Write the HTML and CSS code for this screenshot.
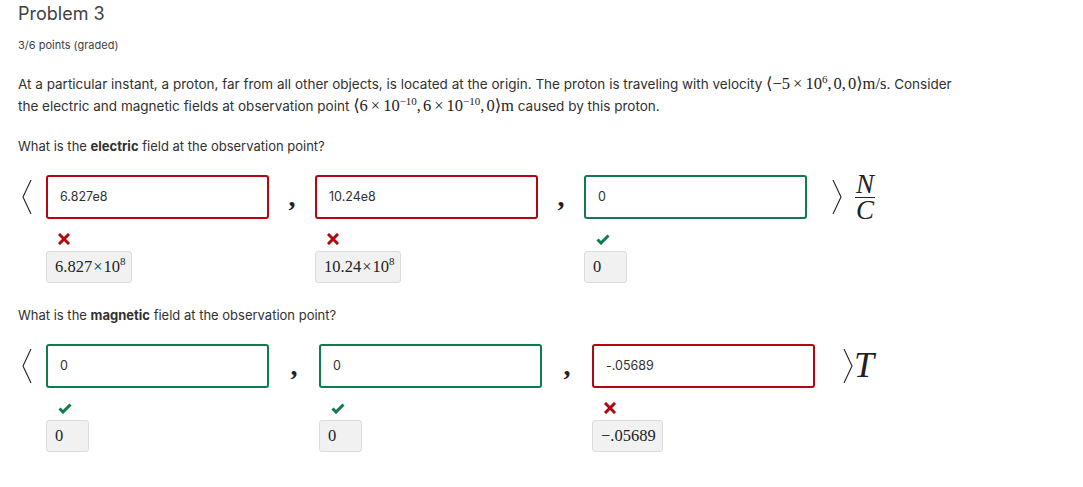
FILE: index.html
```html
<!DOCTYPE html>
<html lang="en">
<head>
    <meta charset="UTF-8">
    <title>Problem 3</title>
    <link rel="stylesheet" href="styles.css">
</head>
<body>
    <div class="problem">
        <h2 class="problem-title">Problem 3</h2>
        <div class="problem-progress">3/6 points (graded)</div>

        <p class="problem-text">
            At a particular instant, a proton, far from all other objects, is located at the origin. The proton is traveling with velocity
            <span class="math">⟨−5<span class="op">×</span>10<sup>6</sup><span class="sep">,</span>0<span class="sep">,</span>0⟩<span class="rm">m/s</span></span>. Consider
            the electric and magnetic fields at observation point
            <span class="math">⟨6<span class="op">×</span>10<sup>−10</sup><span class="sep">,</span>6<span class="op">×</span>10<sup>−10</sup><span class="sep">,</span>0⟩<span class="rm">m</span></span> caused by this proton.
        </p>

        <p class="question">What is the <b>electric</b> field at the observation point?</p>

        <div class="vector-row">
            <div class="bracket">
                <svg width="12" height="36" viewBox="0 0 12 36"><polyline points="10,1 2,18 10,35" fill="none" stroke="#222" stroke-width="1.1"/></svg>
            </div>

            <div class="field">
                <div class="input incorrect">6.827e8</div>
                <div class="status-icon">
                    <svg width="12" height="12" viewBox="0 0 12 12"><path d="M2 2 L10 10 M10 2 L2 10" stroke="#b20610" stroke-width="3" stroke-linecap="square"/></svg>
                </div>
                <div class="answer">6.827<span class="times">×</span>10<sup>8</sup></div>
            </div>

            <div class="comma">,</div>

            <div class="field">
                <div class="input incorrect">10.24e8</div>
                <div class="status-icon">
                    <svg width="12" height="12" viewBox="0 0 12 12"><path d="M2 2 L10 10 M10 2 L2 10" stroke="#b20610" stroke-width="3" stroke-linecap="square"/></svg>
                </div>
                <div class="answer">10.24<span class="times">×</span>10<sup>8</sup></div>
            </div>

            <div class="comma">,</div>

            <div class="field">
                <div class="input correct">0</div>
                <div class="status-icon">
                    <svg width="14" height="12" viewBox="0 0 14 12"><path d="M1.5 6.5 L5 10 L12.5 2.5" fill="none" stroke="#0d7d4d" stroke-width="3"/></svg>
                </div>
                <div class="answer">0</div>
            </div>

            <div class="unit">
                <svg width="12" height="36" viewBox="0 0 12 36"><polyline points="2,1 10,18 2,35" fill="none" stroke="#222" stroke-width="1.1"/></svg>
                <div class="fraction">
                    <span class="num">N</span>
                    <span class="den">C</span>
                </div>
            </div>
        </div>

        <p class="question">What is the <b>magnetic</b> field at the observation point?</p>

        <div class="vector-row wide">
            <div class="bracket">
                <svg width="12" height="36" viewBox="0 0 12 36"><polyline points="10,1 2,18 10,35" fill="none" stroke="#222" stroke-width="1.1"/></svg>
            </div>

            <div class="field">
                <div class="input correct">0</div>
                <div class="status-icon">
                    <svg width="14" height="12" viewBox="0 0 14 12"><path d="M1.5 6.5 L5 10 L12.5 2.5" fill="none" stroke="#0d7d4d" stroke-width="3"/></svg>
                </div>
                <div class="answer">0</div>
            </div>

            <div class="comma">,</div>

            <div class="field">
                <div class="input correct">0</div>
                <div class="status-icon">
                    <svg width="14" height="12" viewBox="0 0 14 12"><path d="M1.5 6.5 L5 10 L12.5 2.5" fill="none" stroke="#0d7d4d" stroke-width="3"/></svg>
                </div>
                <div class="answer">0</div>
            </div>

            <div class="comma">,</div>

            <div class="field">
                <div class="input incorrect">-.05689</div>
                <div class="status-icon">
                    <svg width="12" height="12" viewBox="0 0 12 12"><path d="M2 2 L10 10 M10 2 L2 10" stroke="#b20610" stroke-width="3" stroke-linecap="square"/></svg>
                </div>
                <div class="answer">−.05689</div>
            </div>

            <div class="unit">
                <svg width="12" height="36" viewBox="0 0 12 36"><polyline points="2,1 10,18 2,35" fill="none" stroke="#222" stroke-width="1.1"/></svg>
                <span class="unit-t">T</span>
            </div>
        </div>
    </div>
</body>
</html>
```

FILE: styles.css
```css
:root {
    --text-color: #313131;
    --muted-color: #414141;
    --incorrect-color: #b20610;
    --correct-color: #0d7d4d;
}

* {
    margin: 0;
    padding: 0;
    box-sizing: border-box;
}

body {
    background: white;
    color: var(--text-color);
    font-family: Inter, 'Liberation Sans', sans-serif;
}

.problem {
    padding-left: 18px;
}

.problem-title {
    font-size: 18px;
    font-weight: 400;
    line-height: 28px;
    color: var(--muted-color);
}

.problem-progress {
    font-size: 11px;
    line-height: 16px;
    margin-top: 9px;
    color: var(--muted-color);
}

.problem-text {
    font-size: 13.5px;
    line-height: 22px;
    margin-top: 20px;
    width: 948px;
}

.math {
    font-family: 'Liberation Serif', 'DejaVu Serif', serif;
    font-size: 16.5px;
    line-height: 20px;
    color: #222;
}

.math sup {
    font-size: 11px;
    vertical-align: 6px;
    line-height: 0;
}

.math .op {
    margin: 0 3px;
}

.math .sep {
    margin-right: 2px;
}

.rm {
    font-style: normal;
}

.question {
    font-size: 13px;
    line-height: 22px;
    margin-top: 18px;
}

.vector-row + .question {
    margin-top: 21px;
}

.vector-row {
    display: flex;
    align-items: flex-start;
    margin-top: 18px;
}

.bracket {
    width: 28px;
    padding-top: 4px;
    padding-left: 3px;
}

.field {
    width: 223px;
}

.input {
    height: 44px;
    border: 2px solid;
    border-radius: 3px;
    padding-left: 12px;
    font-size: 12.5px;
    line-height: 40px;
    color: var(--text-color);
}

.input.incorrect {
    border-color: var(--incorrect-color);
}

.input.correct {
    border-color: var(--correct-color);
}

.status-icon {
    height: 12px;
    margin-top: 14px;
    padding-left: 12px;
    line-height: 0;
}

.answer {
    width: fit-content;
    min-width: 43px;
    margin-top: 6px;
    height: 32px;
    padding: 0 6px 0 8px;
    background: #f1f1f1;
    border: 1px solid #dcdcdc;
    border-radius: 3px;
    font-family: 'Liberation Serif', 'DejaVu Serif', serif;
    font-size: 16.5px;
    line-height: 30px;
    color: #222;
}

.answer sup {
    font-size: 11px;
    vertical-align: 7px;
    line-height: 0;
}

.times {
    margin: 0 1px;
}

.comma {
    width: 46px;
    text-align: center;
    padding-top: 8px;
    font-family: 'Liberation Serif', 'DejaVu Serif', serif;
    font-size: 28px;
    font-weight: bold;
    line-height: 28px;
    color: #222;
}

.wide .comma {
    width: 50px;
}

.unit {
    display: flex;
    align-items: flex-start;
    padding-left: 24px;
    padding-top: 4px;
    font-family: 'Liberation Serif', 'DejaVu Serif', serif;
    font-style: italic;
    color: #222;
}

.wide .unit {
    padding-left: 27px;
}

.fraction {
    display: flex;
    flex-direction: column;
    align-items: center;
    margin-left: 12px;
    margin-top: -6px;
    font-size: 27px;
    line-height: 23px;
}

.fraction .num {
    border-bottom: 1.5px solid #222;
    padding: 0 1px 1px;
}

.fraction .den {
    padding-top: 1px;
}

.unit-t {
    font-size: 36px;
    line-height: 34px;
}
```
